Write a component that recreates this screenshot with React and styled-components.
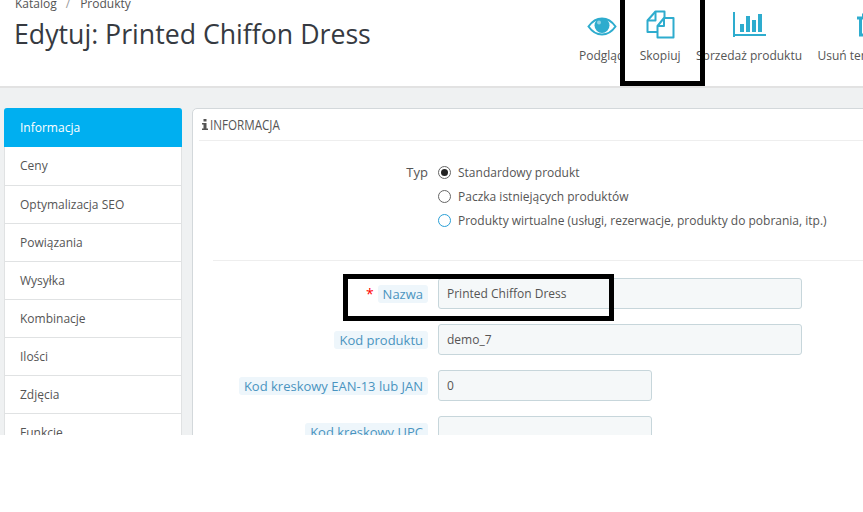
import React from 'react';
import styled, { createGlobalStyle } from 'styled-components';

const GlobalStyle = createGlobalStyle`
  html, body {
    margin: 0;
    padding: 0;
    background: #fff;
    font-family: 'Open Sans', sans-serif;
    color: #363a41;
  }
`;

const Page = styled.div`
  position: relative;
  width: 863px;
  height: 435px;
  overflow: hidden;
  background: #eff1f2;
`;

const Header = styled.header`
  display: flex;
  justify-content: space-between;
  height: 86px;
  background: #fff;
  border-bottom: 2px solid #e2e2e2;
`;

const TitleBlock = styled.div`
  margin-top: -5px;
  padding-left: 14px;
`;

const Breadcrumb = styled.div`
  display: flex;
  gap: 9px;
  height: 17px;
  padding-left: 1px;
  font-size: 12px;
  line-height: 17px;
  color: #555;
`;

const Slash = styled.span`
  margin-right: 1px;
  color: #999;
`;

const Title = styled.h1`
  margin: 4px 0 0;
  font-size: 26.7px;
  line-height: 36px;
  font-weight: 400;
  color: #363a41;
`;

const Toolbar = styled.div`
  display: flex;
  flex: none;
  width: 284px;
  gap: 15.4px;
  overflow: hidden;
  padding-top: 10px;
`;

const ToolButton = styled.div`
  display: flex;
  flex: none;
  flex-direction: column;
  align-items: center;
  font-size: 12px;
  line-height: 16px;
  color: #555;
  white-space: nowrap;
`;

const ToolIcon = styled.div`
  display: flex;
  align-items: center;
  justify-content: center;
  height: 29px;
  margin-bottom: 9px;
  color: #2eacce;
`;

const Body = styled.div`
  display: flex;
  gap: 10px;
  align-items: flex-start;
  padding: 20px 0 0 4px;
`;

const Sidebar = styled.nav`
  display: flex;
  flex: none;
  flex-direction: column;
  width: 178px;
`;

const Tab = styled.div`
  box-sizing: border-box;
  height: ${(p) => (p.$active ? '39px' : '38px')};
  padding-left: ${(p) => (p.$active ? '16px' : '15px')};
  font-size: 12px;
  line-height: ${(p) => (p.$active ? '39px' : '38px')};
  color: ${(p) => (p.$active ? '#fff' : '#555')};
  background: ${(p) => (p.$active ? '#00aff0' : '#fff')};
  border-radius: ${(p) => (p.$active ? '3px 3px 0 0' : '0')};
  border: ${(p) => (p.$active ? 'none' : '1px solid #e0e2e3')};
  border-top: none;

  &:nth-child(2) {
    height: 39px;
  }
`;

const Panel = styled.section`
  flex: 1;
  height: 340px;
  padding: 0 6px;
  margin-right: -30px;
  background: #fff;
  border: 1px solid #d3d8db;
  border-radius: 5px 0 0 0;
`;

const PanelHeader = styled.div`
  display: flex;
  align-items: center;
  gap: 2px;
  height: 31px;
  padding-left: 3px;
  border-bottom: 1px solid #eeeeee;
  color: #555;
`;

const PanelTitle = styled.span`
  display: inline-block;
  font-family: 'Open Sans', sans-serif;
  font-size: 14px;
  font-weight: 500;
  transform: scaleX(0.83);
  transform-origin: left center;
`;

const TypeRow = styled.div`
  display: grid;
  grid-template-columns: 215px 1fr;
  column-gap: 10px;
  height: 120px;
  padding-top: 19px;
  box-sizing: border-box;
  margin-left: 14px;
  margin-right: 20px;
  border-bottom: 1px solid #eeeeee;
`;

const TypeLabel = styled.div`
  text-align: right;
  font-size: 13px;
  line-height: 24px;
  color: #555;
`;

const RadioList = styled.div`
  display: flex;
  flex-direction: column;
`;

const RadioRow = styled.div`
  display: flex;
  align-items: center;
  gap: 7px;
  height: 24px;
  font-size: 12px;
  color: #555;
`;

const RadioCircle = styled.span`
  display: flex;
  align-items: center;
  justify-content: center;
  width: 11px;
  height: 11px;
  border: 1px solid ${(p) => (p.$accent ? '#2a9fd6' : '#666')};
  border-radius: 50%;
  &::after {
    content: '';
    display: ${(p) => (p.$checked ? 'block' : 'none')};
    width: 7px;
    height: 7px;
    border-radius: 50%;
    background: #222;
  }
`;

const Fields = styled.div`
  display: flex;
  flex-direction: column;
  gap: 15px;
  padding-top: 17px;
  margin-left: 14px;
`;

const FieldRow = styled.div`
  display: grid;
  grid-template-columns: 215px ${(p) => (p.$short ? '214px' : '364px')};
  column-gap: 10px;
  align-items: center;
`;

const LabelWrap = styled.div`
  display: flex;
  justify-content: flex-end;
  align-items: center;
  gap: 4px;
`;

const Required = styled.span`
  color: #f00;
  font-size: 14px;
  line-height: 14px;
`;

const LabelChip = styled.span`
  padding: 0 5px;
  font-size: 13px;
  line-height: 18px;
  color: #4a94c0;
  background: #eef6fb;
  border-radius: 3px;
  white-space: nowrap;
`;

const Input = styled.div`
  box-sizing: border-box;
  height: 31px;
  padding-left: 8px;
  font-size: 12px;
  line-height: 29px;
  color: #555;
  background: #f5f8f9;
  border: 1px solid #c7d6db;
  border-radius: 3px;
`;

const Highlight = styled.div`
  position: absolute;
  box-sizing: border-box;
  border: 5px solid #000;
  left: ${(p) => p.$x}px;
  top: ${(p) => p.$y}px;
  width: ${(p) => p.$w}px;
  height: ${(p) => p.$h}px;
`;

const EyeIcon = () => (
  <svg width="30" height="22" viewBox="0 0 30 22" fill="none">
    <path d="M1.5 12.5C5 7.5 9.5 4.5 15 4.5S25 7.5 28.5 12.5C25 17.5 20.5 20.5 15 20.5S5 17.5 1.5 12.5Z" stroke="currentColor" strokeWidth="2" />
    <circle cx="15" cy="11.5" r="7.5" fill="currentColor" />
    <circle cx="12" cy="8.5" r="2" fill="#8fd2e4" />
  </svg>
);

const CopyIcon = () => (
  <svg width="29" height="29" viewBox="0 0 29 29" fill="none" stroke="currentColor" strokeWidth="2" strokeLinejoin="round">
    <path d="M11 22H1.5V10.5L9.5 1.5H18.5V8" />
    <path d="M9.5 1.5V10.5H1.5" />
    <path d="M11.5 27.5V16L18 8H27.5V27.5Z" />
    <path d="M18 8V16H11.5" />
  </svg>
);

const ChartIcon = () => (
  <svg width="33" height="25" viewBox="0 0 33 25" fill="currentColor">
    <rect x="0" y="0" width="2" height="25" />
    <rect x="0" y="22" width="33" height="2" />
    <rect x="7" y="12" width="4" height="8" />
    <rect x="13" y="4" width="4" height="16" />
    <rect x="19" y="8" width="4" height="12" />
    <rect x="25" y="2" width="4" height="18" />
  </svg>
);

const TrashIcon = () => (
  <svg width="20" height="24" viewBox="0 0 20 24" fill="none" stroke="currentColor" strokeWidth="3">
    <path d="M0 5H20" />
    <path d="M6 5V1.5H14V5" strokeWidth="2" />
    <path d="M3.5 5V22H16.5V5" />
    <path d="M8 9V19M12 9V19" strokeWidth="2" />
  </svg>
);

const InfoGlyph = () => (
  <svg width="6" height="11" viewBox="0 0 6 11" fill="#555">
    <rect x="1.5" y="0" width="3" height="2.5" />
    <path d="M0 4H4.5V9.5H6V11H0V9.5H1.5V5.5H0Z" />
  </svg>
);

const tabs = ['Informacja', 'Ceny', 'Optymalizacja SEO', 'Powiązania', 'Wysyłka', 'Kombinacje', 'Ilości', 'Zdjęcia', 'Funkcje'];

const tools = [
  { label: 'Podgląd', icon: <EyeIcon /> },
  { label: 'Skopiuj', icon: <CopyIcon /> },
  { label: 'Sprzedaż produktu', icon: <ChartIcon /> },
  { label: 'Usuń ten produkt', icon: <TrashIcon /> },
];

const radios = [
  { label: 'Standardowy produkt', checked: true },
  { label: 'Paczka istniejących produktów' },
  { label: 'Produkty wirtualne (usługi, rezerwacje, produkty do pobrania, itp.)', accent: true },
];

const fields = [
  { label: 'Nazwa', value: 'Printed Chiffon Dress', required: true },
  { label: 'Kod produktu', value: 'demo_7' },
  { label: 'Kod kreskowy EAN-13 lub JAN', value: '0', short: true },
  { label: 'Kod kreskowy UPC', value: '', short: true },
];

const App = () => (
  <>
    <GlobalStyle />
    <Page>
      <Header>
        <TitleBlock>
          <Breadcrumb>
            <span>Katalog</span>
            <Slash>/</Slash>
            <span>Produkty</span>
          </Breadcrumb>
          <Title>Edytuj: Printed Chiffon Dress</Title>
        </TitleBlock>
        <Toolbar>
          {tools.map((t) => (
            <ToolButton key={t.label}>
              <ToolIcon>{t.icon}</ToolIcon>
              {t.label}
            </ToolButton>
          ))}
        </Toolbar>
      </Header>
      <Body>
        <Sidebar>
          {tabs.map((t, i) => (
            <Tab key={t} $active={i === 0}>{t}</Tab>
          ))}
        </Sidebar>
        <Panel>
          <PanelHeader>
            <InfoGlyph />
            <PanelTitle>INFORMACJA</PanelTitle>
          </PanelHeader>
          <TypeRow>
            <TypeLabel>Typ</TypeLabel>
            <RadioList>
              {radios.map((r) => (
                <RadioRow key={r.label}>
                  <RadioCircle $checked={r.checked} $accent={r.accent} />
                  {r.label}
                </RadioRow>
              ))}
            </RadioList>
          </TypeRow>
          <Fields>
            {fields.map((f) => (
              <FieldRow key={f.label} $short={f.short}>
                <LabelWrap>
                  {f.required && <Required>*</Required>}
                  <LabelChip>{f.label}</LabelChip>
                </LabelWrap>
                <Input>{f.value}</Input>
              </FieldRow>
            ))}
          </Fields>
        </Panel>
      </Body>
      <Highlight $x={620} $y={-10} $w={85} $h={96} />
      <Highlight $x={343} $y={274} $w={271} $h={47} />
    </Page>
  </>
);

export default App;
